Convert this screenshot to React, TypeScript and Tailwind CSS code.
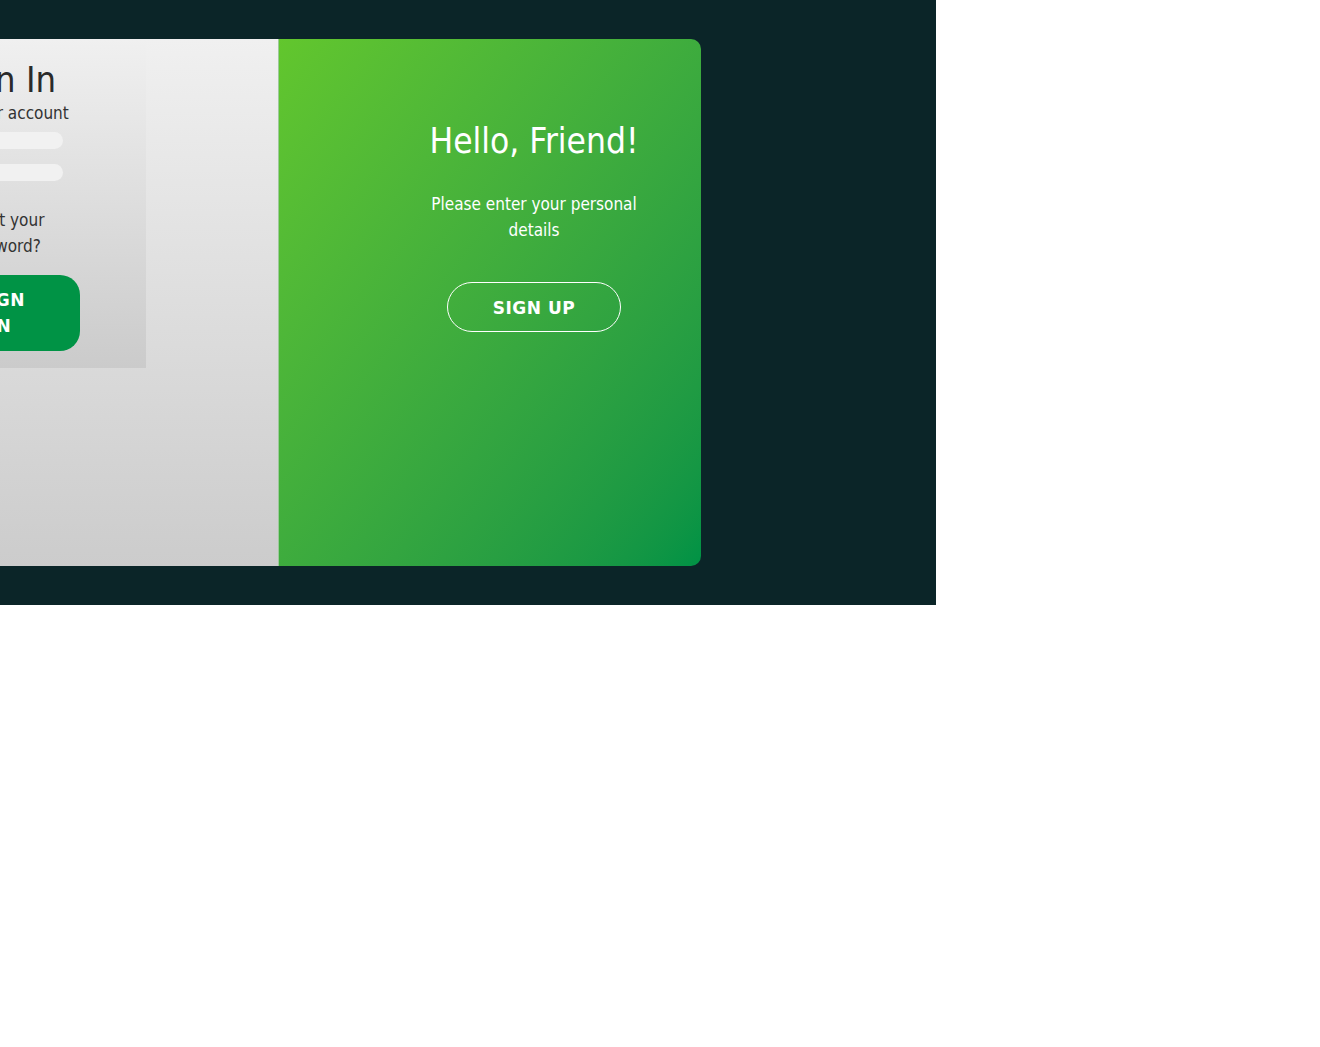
const font = "font-['DejaVu_Sans_Condensed','DejaVu_Sans',sans-serif] font-stretch-condensed";
const boldFont = "font-['DejaVu_Sans',sans-serif] font-stretch-normal font-bold";

const App = () => {
  return (
    <div className={`w-[936px] h-[605px] bg-[#0b2528] pt-[39px] overflow-hidden ${font}`}>
      <div className="-ml-[145px] flex w-[846px] h-[527px] rounded-[10px] overflow-hidden">
        {/* sign in side */}
        <div className="w-[423px] h-full bg-linear-to-b from-[#f0f0f0] to-[#cccccc]">
          <div className="w-[291px] h-[329px] bg-linear-to-b from-[#f0f0f0] to-[#cbcbcb] flex flex-col items-center pt-[19px] text-center">
            <h1 className="text-[36px] leading-[43px] text-[#2a2a2a]">Sign In</h1>
            <p className="text-[17px] leading-[22px] text-[#333] mt-[1px] pr-[16px] whitespace-nowrap">or use your account</p>
            <input
              className="w-[124px] h-[17px] rounded-full bg-[#f1f1f1] outline-none mt-[8px]"
              type="email"
            />
            <input
              className="w-[124px] h-[17px] rounded-full bg-[#f1f1f1] outline-none mt-[15px]"
              type="password"
            />
            <p className="w-[124px] text-[17px] leading-[26px] text-[#333] mt-[26px]">Forgot your password?</p>
            <button className={`w-[158px] h-[76px] rounded-[20px] bg-[#009345] text-white text-[17px] leading-[26px] tracking-[0.5px] px-[50px] mt-[16px] ${boldFont}`}>
              SIGN IN
            </button>
          </div>
        </div>

        {/* overlay */}
        <div className="w-[423px] h-full border-l border-[#9cc99a] bg-linear-to-br from-[#62c62d] to-[#009245]">
          <div className="ml-[150px] w-[210px] flex flex-col items-center text-center text-white pt-[81px]">
            <h1 className="text-[35px] leading-[43px] whitespace-nowrap">Hello, Friend!</h1>
            <p className="text-[17px] leading-[26px] mt-[28px]">Please enter your personal details</p>
            <button className={`w-[174px] h-[50px] rounded-full border border-white text-[17px] tracking-[0.5px] pt-[3px] mt-[39px] ${boldFont}`}>
              SIGN UP
            </button>
          </div>
        </div>
      </div>
    </div>
  );
};

export default App;
